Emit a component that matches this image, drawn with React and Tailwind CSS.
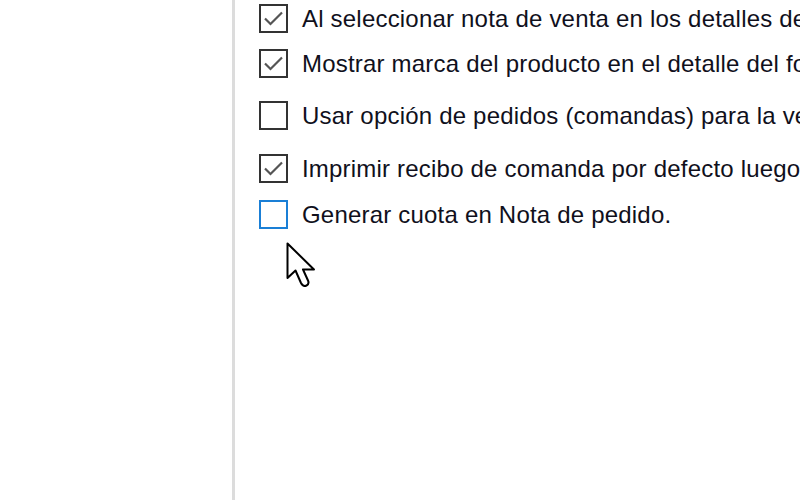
import { useState } from "react";

const opciones = [
  { label: "Al seleccionar nota de venta en los detalles del formulario", checked: true, top: "mt-[4px]" },
  { label: "Mostrar marca del producto en el detalle del formulario", checked: true, top: "mt-[16px]" },
  { label: "Usar opción de pedidos (comandas) para la venta", checked: false, top: "mt-[23px]" },
  { label: "Imprimir recibo de comanda por defecto luego de guardar", checked: true, top: "mt-[24px]" },
  { label: "Generar cuota en Nota de pedido.", checked: false, top: "mt-[17px]", focus: true },
];

function Check({ checked, focus }) {
  return (
    <div className={"w-[29px] h-[29px] shrink-0 border-2 bg-white flex items-center justify-center " + (focus ? "border-[#1a7fd6]" : "border-[#333]")}>
      {checked && (
        <svg width="21" height="17" viewBox="0 0 21 17" fill="none">
          <path d="M2 8.5 L7.5 14 L19 2.5" stroke="#555" strokeWidth="2.2" />
        </svg>
      )}
    </div>
  );
}

export default function App() {
  const [items, setItems] = useState(opciones);

  return (
    <div className="w-[800px] h-[500px] overflow-hidden bg-white flex relative" style={{ fontFamily: '"Liberation Sans", Arial, sans-serif' }}>
      <div className="w-[232px] shrink-0" />
      <div className="w-[3px] shrink-0 bg-[#dcdcdc]" />
      <div className="flex-1 min-w-0 pl-[24px] flex flex-col overflow-hidden">
        {items.map((it, idx) => (
          <div
            key={idx}
            className={"flex items-center gap-[14px] h-[29px] whitespace-nowrap " + it.top}
            onClick={() => setItems(items.map((x, i) => (i === idx ? { ...x, checked: !x.checked } : x)))}
          >
            <Check checked={it.checked} focus={it.focus} />
            <span className="text-[24px] text-[#10101c] tracking-[0.2px] leading-none">{it.label}</span>
          </div>
        ))}
      </div>
      <svg className="absolute left-[286px] top-[242px]" width="32" height="50" viewBox="0 0 32 50">
        <path d="M1.5 1.5 L1.5 36 L9.5 28.5 L15 41 Q17 45 20.5 43.5 Q23.5 42 22 38.5 L17 27.5 L28 27.5 Z" fill="#fff" stroke="#000" strokeWidth="2" strokeLinejoin="round" />
      </svg>
    </div>
  );
}
